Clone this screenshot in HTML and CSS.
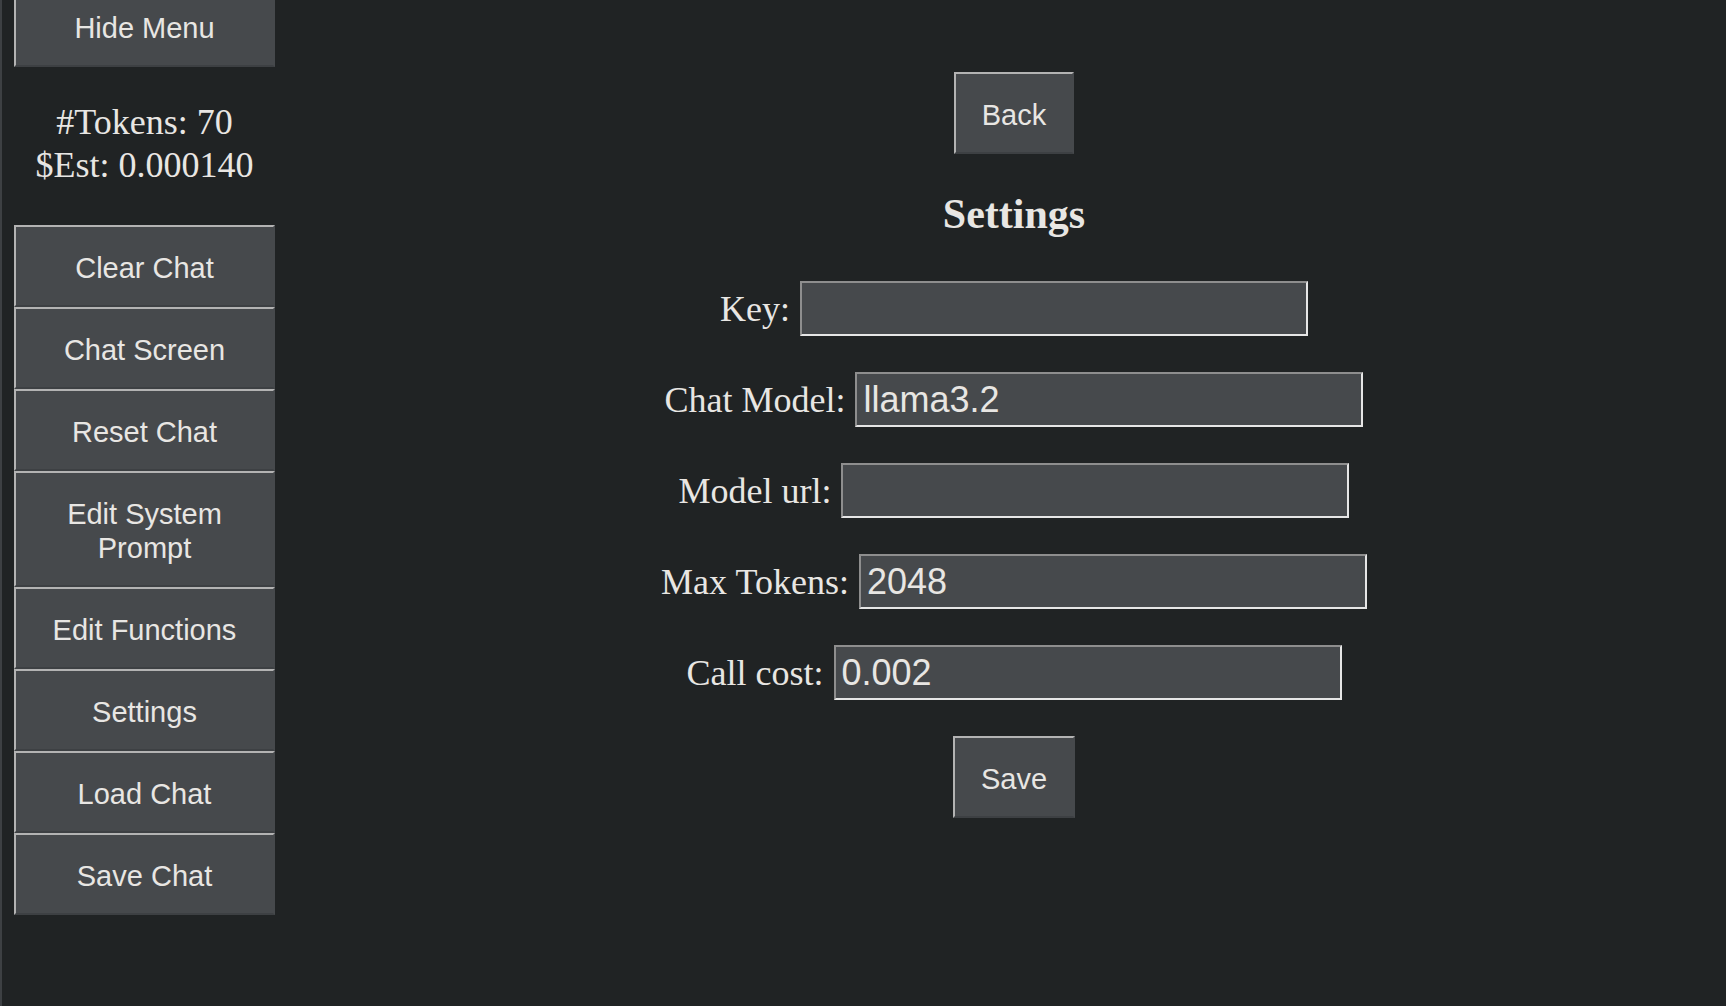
FILE: index.html
```html
<!DOCTYPE html>
<html lang="en">
<head>
<meta charset="utf-8">
<title>Settings</title>
<link rel="stylesheet" href="styles.css">
</head>
<body>
<div class="app">
  <aside class="sidebar">
    <button class="btn side-btn hide-btn">Hide Menu</button>
    <div class="stats">
      <div>#Tokens: 70</div>
      <div>$Est: 0.000140</div>
    </div>
    <div class="menu">
      <button class="btn side-btn">Clear Chat</button>
      <button class="btn side-btn">Chat Screen</button>
      <button class="btn side-btn">Reset Chat</button>
      <button class="btn side-btn">Edit System<br>Prompt</button>
      <button class="btn side-btn">Edit Functions</button>
      <button class="btn side-btn">Settings</button>
      <button class="btn side-btn">Load Chat</button>
      <button class="btn side-btn">Save Chat</button>
    </div>
  </aside>
  <main class="main">
    <button class="btn act-btn">Back</button>
    <h2 class="title">Settings</h2>
    <div class="row"><label class="lbl">Key:</label><input class="field" type="text" value=""></div>
    <div class="row"><label class="lbl">Chat Model:</label><input class="field" type="text" value="llama3.2"></div>
    <div class="row"><label class="lbl">Model url:</label><input class="field" type="text" value=""></div>
    <div class="row"><label class="lbl">Max Tokens:</label><input class="field" type="text" value="2048"></div>
    <div class="row"><label class="lbl">Call cost:</label><input class="field" type="text" value="0.002"></div>
    <button class="btn act-btn save-btn">Save</button>
  </main>
</div>
</body>
</html>
```
FILE: styles.css
```css
html, body {
  margin: 0;
  padding: 0;
  background: #202324;
  color: #e8e6e3;
  height: 100%;
  overflow: hidden;
}

.app {
  display: flex;
  min-height: 100%;
}

.sidebar {
  flex: none;
  border-left: 2px solid #3d4043;
  display: flex;
  flex-direction: column;
  align-items: flex-start;
  padding-left: 12px;
  box-sizing: border-box;
  width: 302px;
  margin-top: -15px;
}

.btn {
  font-family: "Liberation Sans", Arial, sans-serif;
  font-size: 29px;
  line-height: 34px;
  color: #e8e6e3;
  background: #46494c;
  border-style: solid;
  border-width: 2px;
  border-color: #b3b3b3 #46494c #3d4043 #b3b3b3;
  padding: 24px 26px 20px;
  margin: 0;
  text-align: center;
  box-sizing: border-box;
  display: block;
}

.side-btn {
  width: 261px;
  padding: 24px 4px 20px;
}

.stats {
  width: 261px;
  text-align: center;
  font-family: "Liberation Serif", "Times New Roman", serif;
  font-size: 36px;
  line-height: 43px;
  padding: 34px 0 38px;
}

.menu {
  display: flex;
  flex-direction: column;
}

.main {
  flex: 1;
  display: flex;
  flex-direction: column;
  align-items: center;
  padding-top: 72px;
}

.title {
  font-family: "Liberation Serif", "Times New Roman", serif;
  font-weight: bold;
  font-size: 42px;
  line-height: 48px;
  margin: 36px 0 43px;
}

.row {
  display: flex;
  align-items: center;
  justify-content: center;
  gap: 10px;
  height: 55px;
  margin-bottom: 36px;
}

.lbl {
  font-family: "Liberation Serif", "Times New Roman", serif;
  font-size: 36px;
  line-height: 45px;
  padding-top: 2px;
}

.field {
  width: 508px;
  height: 55px;
  box-sizing: border-box;
  background: #46494c;
  color: #e8e6e3;
  font-family: "Liberation Sans", Arial, sans-serif;
  font-size: 36px;
  padding: 0 6px;
  border-style: solid;
  border-width: 2px;
  border-color: #8e8e8e #e6e6e6 #e6e6e6 #8e8e8e;
  margin: 0;
  outline: none;
}
```
